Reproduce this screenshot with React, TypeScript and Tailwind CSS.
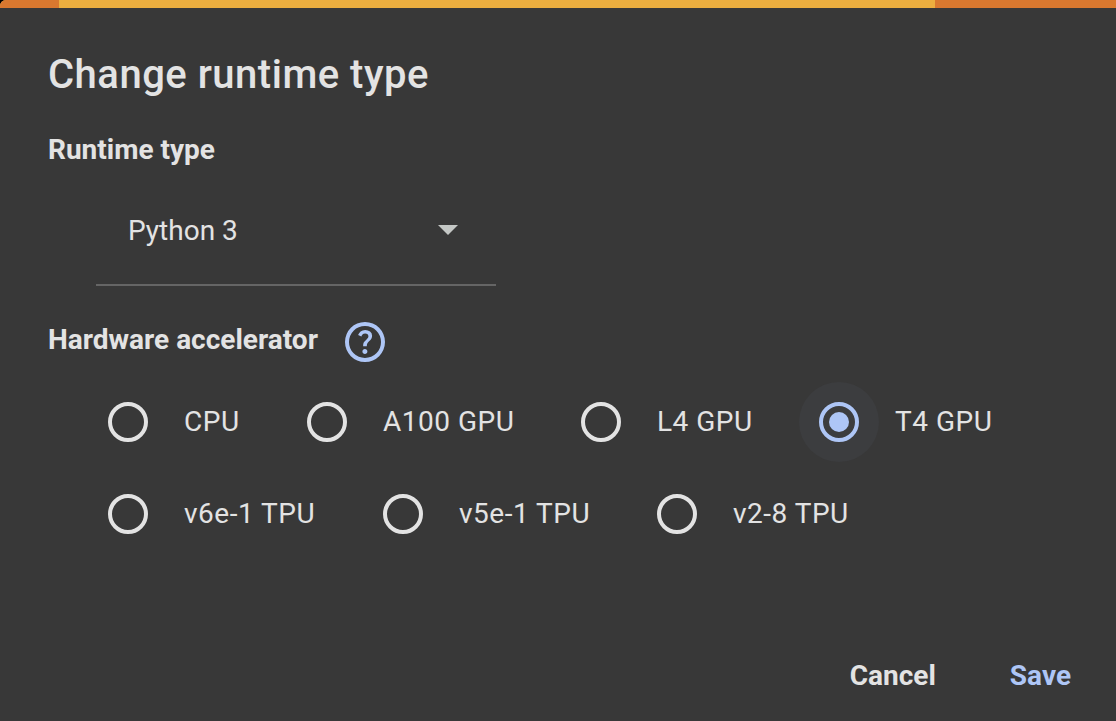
import React from "react";

type RadioOptionProps = { label: string; selected?: boolean; className: string };

function RadioOption({ label, selected = false, className }: RadioOptionProps) {
  return (
    <label className={`flex h-20 shrink-0 items-center ${className}`}>
      <span
        className={`flex size-20 shrink-0 items-center justify-center rounded-full ${
          selected ? "bg-[#3c3d3f]" : ""
        }`}
      >
        <svg width="40" height="40" viewBox="0 0 40 40" fill="none">
          <circle cx="20" cy="20" r="18" strokeWidth="4" className={selected ? "stroke-[#aec6f6]" : "stroke-[#e3e3e3]"} />
          {selected && <circle cx="20" cy="20" r="10" className="fill-[#aec6f6]" />}
        </svg>
      </span>
      <span className="ml-4 whitespace-nowrap text-[28px] leading-10 tracking-[0.5px]">{label}</span>
    </label>
  );
}

export default function App() {
  return (
    <div className="h-[721px] w-[1116px] bg-black">
      <div className="flex h-full flex-col overflow-hidden rounded-tl-[6px] bg-[#383838] font-[Roboto,sans-serif] text-[#e3e3e3]">
        <div className="flex h-2 shrink-0 bg-[#ecae3f]">
          <div className="h-2 w-[59px] bg-[#d9782f]" />
          <div className="ml-auto h-2 w-[181px] bg-[#d9782f]" />
        </div>
        <h1 className="ml-12 mt-[43px] h-12 text-[40px] font-medium leading-[48px] tracking-[0.5px]">
          Change runtime type
        </h1>
        <h2 className="ml-12 mt-[31px] h-10 text-[28px] font-bold leading-10">Runtime type</h2>
        <div className="ml-24 mt-[5px] flex h-[111px] w-[400px] items-center justify-between border-b-2 border-[#656565] pl-8 pr-[38px]">
          <span className="pt-0.5 text-[28px] leading-10">Python 3</span>
          <svg width="20" height="10" viewBox="0 0 20 10" className="fill-[#c4c7c5]">
            <path d="M0 0h20L10 10z" />
          </svg>
        </div>
        <div className="ml-12 mt-[34px] flex h-11 items-center">
          <h2 className="w-[297px] pb-1 text-[28px] font-bold leading-10">Hardware accelerator</h2>
          <svg width="40" height="40" viewBox="80 -880 800 800" className="fill-[#aec6f6]">
            <path d="M478-240q21 0 35.5-14.5T528-290q0-21-14.5-35.5T478-340q-21 0-35.5 14.5T428-290q0 21 14.5 35.5T478-240Zm-36-154h74q0-33 7.5-52t42.5-52q26-26 41-49.5t15-56.5q0-56-41-86t-97-30q-57 0-92.5 30T342-618l66 26q5-18 22.5-39t53.5-21q32 0 48 17.5t16 38.5q0 20-12 37.5T506-526q-44 39-54 59t-10 73Zm38 314q-83 0-156-31.5T197-197q-54-54-85.5-127T80-480q0-83 31.5-156T197-763q54-54 127-85.5T480-880q83 0 156 31.5T763-763q54 54 85.5 127T880-480q0 83-31.5 156T763-197q-54 54-127 85.5T480-80Zm0-80q134 0 227-93t93-227q0-134-93-227t-227-93q-134 0-227 93t-93 227q0 134 93 227t227 93Z" />
          </svg>
        </div>
        <div className="ml-[88px] mt-[18px] flex">
          <RadioOption label="CPU" className="w-[199px]" />
          <RadioOption label="A100 GPU" className="w-[274px]" />
          <RadioOption label="L4 GPU" className="w-[238px]" />
          <RadioOption label="T4 GPU" selected className="w-[220px]" />
        </div>
        <div className="ml-[88px] mt-3 flex">
          <RadioOption label="v6e-1 TPU" className="w-[275px]" />
          <RadioOption label="v5e-1 TPU" className="w-[274px]" />
          <RadioOption label="v2-8 TPU" className="w-[220px]" />
        </div>
        <div className="mb-[25px] mr-[45px] mt-auto flex h-10 justify-end gap-[74px] text-[28px] font-bold leading-10">
          <button>Cancel</button>
          <button className="text-[#aec6f6]">Save</button>
        </div>
      </div>
    </div>
  );
}
